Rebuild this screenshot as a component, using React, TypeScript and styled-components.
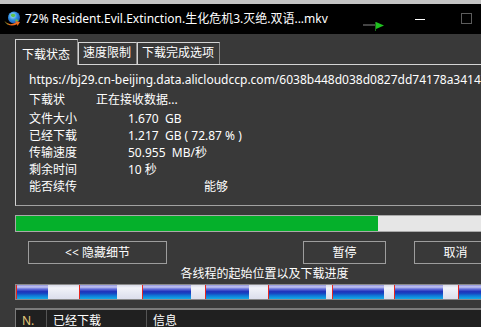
import React from "react";
import styled, { createGlobalStyle } from "styled-components";

const Global = createGlobalStyle`
  html, body { margin: 0; padding: 0; background: #393939; }
  body {
    font-family: "Noto Sans", "Noto Sans CJK SC", sans-serif;
    font-size: 12px;
    color: #ffffff;
  }
  #root { width: 481px; height: 327px; overflow: hidden; }
`;

const Window = styled.div`
  width: 535px;
  height: 327px;
  display: flex;
  flex-direction: column;
  background: #393939;
  overflow: hidden;
`;

const TopEdge = styled.div`
  flex: none;
  height: 4px;
  background: #c3c3c3;
`;

const TitleBar = styled.div`
  flex: none;
  height: 30px;
  background: #000000;
  display: flex;
  align-items: center;
  padding-left: 4px;
`;

const AppIcon = styled.svg`
  flex: none;
  width: 17px;
  height: 16px;
  margin-right: 4px;
`;

const Title = styled.div`
  flex: 1;
  min-width: 0;
  white-space: nowrap;
  overflow: hidden;
  font-size: 12px;
  line-height: 16px;
  color: #ffffff;
`;

const Flag = styled.svg`
  flex: none;
  width: 21px;
  height: 10px;
  margin: 16px 13px 0 0;
`;

const Caption = styled.div`
  flex: none;
  width: 46px;
  height: 30px;
  display: flex;
  align-items: center;
  justify-content: center;
`;

const MinGlyph = styled.span`
  width: 10px;
  height: 1px;
  background: #ffffff;
`;

const MaxGlyph = styled.span`
  box-sizing: border-box;
  width: 11px;
  height: 11px;
  border: 1px solid #5c5c5c;
  margin-top: -2px;
`;

const CloseGlyph = styled.svg`
  width: 10px;
  height: 10px;
`;

const Body = styled.div`
  flex: 1;
  display: flex;
  flex-direction: column;
  padding: 5px 21px 0 15px;
  min-height: 0;
  & > * { flex: none; }
`;

const TabRow = styled.div`
  display: flex;
  align-items: flex-end;
  height: 25px;
  position: relative;
  z-index: 1;
`;

const Tab = styled.div<{ $active?: boolean }>`
  box-sizing: border-box;
  height: ${(p) => (p.$active ? 26 : 22)}px;
  margin-bottom: ${(p) => (p.$active ? -1 : 0)}px;
  padding: ${(p) => (p.$active ? "8px 7px 0 6px" : "3px 5px 0 4px")};
  border: 1px solid #d4d4d4;
  border-bottom: none;
  border-right-color: #8c8c8c;
  background: #393939;
  line-height: 14px;
  white-space: nowrap;
`;

const Panel = styled.div`
  box-sizing: border-box;
  height: 142px;
  border: 1px solid #d4d4d4;
  border-bottom-color: #a2a2a2;
  border-right-color: #a2a2a2;
  padding: 6px 0 0 13px;
  overflow: hidden;
`;

const Url = styled.div`
  line-height: 17px;
  white-space: nowrap;
`;

const StatusRow = styled.div`
  display: flex;
  margin-top: 3px;
  line-height: 17px;
  white-space: nowrap;
`;

const StatusLabel = styled.span`
  width: 67px;
  flex: none;
`;

const InfoGrid = styled.div`
  margin-top: 2px;
  display: grid;
  grid-template-columns: 99px 1fr;
  line-height: 17px;
  white-space: pre;
`;

const Value = styled.span<{ $indent?: number }>`
  padding-left: ${(p) => p.$indent ?? 0}px;
`;

const Progress = styled.div`
  box-sizing: border-box;
  margin-top: 9px;
  height: 17px;
  border: 1px solid #a9a9a9;
  background: #e6e6e6;
  display: flex;
`;

const ProgressFill = styled.div`
  background: #05b02b;
  height: 100%;
`;

const ButtonRow = styled.div`
  display: flex;
  margin-top: 9px;
  padding: 0 17px 0 13px;
  height: 23px;
`;

const Button = styled.div<{ $w: number }>`
  box-sizing: border-box;
  flex: none;
  width: ${(p) => p.$w}px;
  height: 23px;
  border: 1px solid #9d9d9d;
  display: flex;
  align-items: center;
  justify-content: center;
  line-height: 14px;
  white-space: pre;
`;

const Spacer = styled.div<{ $w?: number }>`
  flex: ${(p) => (p.$w ? "none" : "1")};
  width: ${(p) => (p.$w ? `${p.$w}px` : "auto")};
`;

const ThreadLabel = styled.div`
  margin-top: 1px;
  line-height: 18px;
  text-align: center;
  white-space: nowrap;
`;

const ThreadBar = styled.div`
  box-sizing: border-box;
  margin-top: 1px;
  height: 16px;
  border: 1px solid #8a8a8a;
  display: flex;
  overflow: hidden;
`;

const Thread = styled.div`
  box-sizing: border-box;
  flex: none;
  display: flex;
  border-left: 1px solid #e8261e;
  height: 100%;
`;

const ThreadDone = styled.div`
  flex: none;
  height: 100%;
  background: linear-gradient(
    to bottom,
    #8f92dc 0%,
    #c6c8f2 14%,
    #6a74dc 28%,
    #1f34bc 46%,
    #1840c0 58%,
    #0f78d6 76%,
    #14ade6 100%
  );
`;

const ThreadRest = styled.div`
  flex: 1;
  height: 100%;
  background: linear-gradient(to bottom, #d8dae8 0%, #f2f3f9 20%, #e6e8f2 60%, #dcdeec 100%);
`;

const List = styled.div`
  && { flex: 1; }
  margin-top: 8px;
  border-top: 2px solid #7b7b7b;
  border-left: 1px solid #7b7b7b;
  background: #202020;
  display: grid;
  grid-template-columns: 31px 100px 1fr;
  align-content: start;
  min-height: 0;
`;

const HeadCell = styled.div<{ $accent?: boolean }>`
  box-sizing: border-box;
  padding: 2px 0 0 6px;
  line-height: 18px;
  height: 30px;
  border-right: 1px solid #555555;
  color: ${(p) => (p.$accent ? "#e2c77a" : "#ffffff")};
  white-space: nowrap;
`;

const threads = [
  { width: 63, done: 32 },
  { width: 63, done: 38 },
  { width: 63, done: 49 },
  { width: 63, done: 44 },
  { width: 64, done: 58 },
  { width: 62, done: 52 },
  { width: 64, done: 49 },
  { width: 56, done: 44 },
];

const info: [string, string, number?][] = [
  ["文件大小", "1.670  GB"],
  ["已经下载", "1.217  GB ( 72.87 % )"],
  ["传输速度", "50.955  MB/秒"],
  ["剩余时间", "10 秒"],
  ["能否续传", "能够", 76],
];

export default function App() {
  const percent = 72.87;
  return (
    <>
      <Global />
      <Window>
        <TopEdge />
        <TitleBar>
          <AppIcon viewBox="0 0 17 16">
            <defs>
              <radialGradient id="globe" cx="40%" cy="35%" r="70%">
                <stop offset="0" stopColor="#b8ecff" />
                <stop offset="0.5" stopColor="#2f8ee0" />
                <stop offset="1" stopColor="#1a4fa8" />
              </radialGradient>
            </defs>
            <circle cx="10" cy="6.5" r="6" fill="url(#globe)" />
            <path d="M7 3.5 Q9 2 11 3.5 Q12 5 10 6 Q8 6.5 7 5 Z" fill="#5fc24a" />
            <path d="M11.5 8 Q13.5 8 14.5 9.5 Q13 11 11.5 10 Z" fill="#5fc24a" />
            <path d="M0.5 10 Q5 15.5 12 11.5 L11 10 L16 11 L13.5 15 L13 13.2 Q5 17 0.5 10 Z" fill="#ee6a1a" />
            <path d="M0.5 10 Q2 13 5 13.8 Q2.5 14 0.5 10 Z" fill="#3fae3a" />
          </AppIcon>
          <Title>72% Resident.Evil.Extinction.生化危机3.灭绝.双语...mkv</Title>
          <Flag viewBox="0 0 21 10">
            <rect x="0" y="2" width="12" height="2" fill="#444444" />
            <rect x="12" y="0" width="1" height="9" fill="#1c6a1c" />
            <path d="M13 0 L21 3.5 L13 7 Z" fill="#1fc21f" />
          </Flag>
          <Caption>
            <MinGlyph />
          </Caption>
          <Caption>
            <MaxGlyph />
          </Caption>
          <Caption>
            <CloseGlyph viewBox="0 0 10 10">
              <path d="M0 0 L10 10 M10 0 L0 10" stroke="#ffffff" strokeWidth="1" />
            </CloseGlyph>
          </Caption>
        </TitleBar>
        <Body>
          <TabRow>
            <Tab $active>下载状态</Tab>
            <Tab>速度限制</Tab>
            <Tab>下载完成选项</Tab>
          </TabRow>
          <Panel>
            <Url>https://bj29.cn-beijing.data.alicloudccp.com/6038b448d038d0827dd74178a34147</Url>
            <StatusRow>
              <StatusLabel>下载状</StatusLabel>
              <span>正在接收数据...</span>
            </StatusRow>
            <InfoGrid>
              {info.map(([label, value, indent]) => (
                <React.Fragment key={label}>
                  <span>{label}</span>
                  <Value $indent={indent}>{value}</Value>
                </React.Fragment>
              ))}
            </InfoGrid>
          </Panel>
          <Progress>
            <ProgressFill style={{ width: `${percent}%` }} />
          </Progress>
          <ButtonRow>
            <Button $w={139}>{"<< 隐藏细节"}</Button>
            <Spacer />
            <Button $w={83}>暂停</Button>
            <Spacer $w={28} />
            <Button $w={83}>取消</Button>
          </ButtonRow>
          <ThreadLabel>各线程的起始位置以及下载进度</ThreadLabel>
          <ThreadBar>
            {threads.map((t, i) => (
              <Thread key={i} style={{ width: t.width }}>
                <ThreadDone style={{ width: t.done - 1 }} />
                <ThreadRest />
              </Thread>
            ))}
          </ThreadBar>
          <List>
            <HeadCell $accent>N.</HeadCell>
            <HeadCell>已经下载</HeadCell>
            <HeadCell>信息</HeadCell>
          </List>
        </Body>
      </Window>
    </>
  );
}
